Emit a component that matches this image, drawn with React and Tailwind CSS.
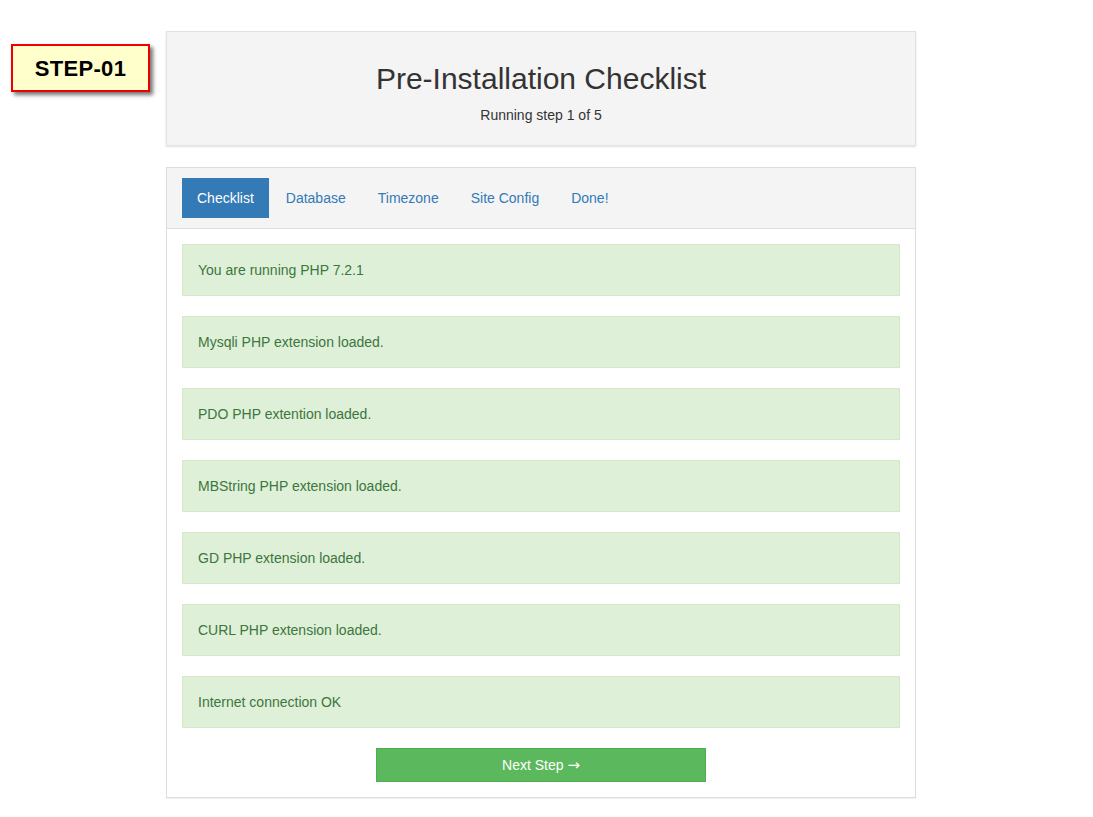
const checks = [
  'You are running PHP 7.2.1',
  'Mysqli PHP extension loaded.',
  'PDO PHP extention loaded.',
  'MBString PHP extension loaded.',
  'GD PHP extension loaded.',
  'CURL PHP extension loaded.',
  'Internet connection OK',
]

const tabs = ['Checklist', 'Database', 'Timezone', 'Site Config', 'Done!']

export default function App() {
  return (
    <main className="bg-white min-h-screen font-['Liberation_Sans',Arial,sans-serif] text-[14px] text-[#333]">
      <div className="flex items-start pt-[31px]">
        <div className="ml-[11px] mt-[13px] w-[139px] h-[48px] flex items-center justify-center bg-[#ffffcc] border-2 border-[#ee0000] shadow-[3px_3px_4px_rgba(0,0,0,0.55)]">
          <span className="text-[22px] font-bold text-black tracking-[0.3px]">STEP-01</span>
        </div>

        <div className="ml-[16px] w-[750px]">
          <div className="bg-[#f4f4f4] border border-[#e2e2e2] shadow-[0_1px_2px_rgba(0,0,0,0.12)] pt-[29px] pb-[20px] text-center">
            <h1 className="text-[30px] leading-[36px] text-[#333]">Pre-Installation Checklist</h1>
            <p className="mt-[8px] leading-[20px]">Running step 1 of 5</p>
          </div>

          <div className="mt-[21px] border border-[#dddddd] shadow-[0_1px_1px_rgba(0,0,0,0.05)] bg-white">
            <div className="bg-[#f4f4f4] border-b border-[#dddddd] px-[15px] py-[10px] flex gap-[2px]">
              {tabs.map((t, i) => (
                <a
                  key={t}
                  className={
                    i === 0
                      ? 'px-[15px] py-[10px] leading-[20px] bg-[#337ab7] text-white'
                      : 'px-[15px] py-[10px] leading-[20px] text-[#337ab7]'
                  }
                >
                  {t}
                </a>
              ))}
            </div>

            <div className="px-[15px] pt-[15px] pb-[15px] flex flex-col gap-[20px]">
              {checks.map((c) => (
                <div key={c} className="bg-[#dff0d8] border border-[#d6e9c6] text-[#3c763d] px-[15px] py-[15px] leading-[20px]">
                  {c}
                </div>
              ))}
              <div className="flex justify-center">
                <button className="w-[330px] bg-[#5cb85c] border border-[#4cae4c] text-white py-[6px] leading-[20px]">
                  Next Step <span className="font-['DejaVu_Sans',sans-serif] text-[15px]">&rarr;</span>
                </button>
              </div>
            </div>
          </div>
        </div>
      </div>
    </main>
  )
}
